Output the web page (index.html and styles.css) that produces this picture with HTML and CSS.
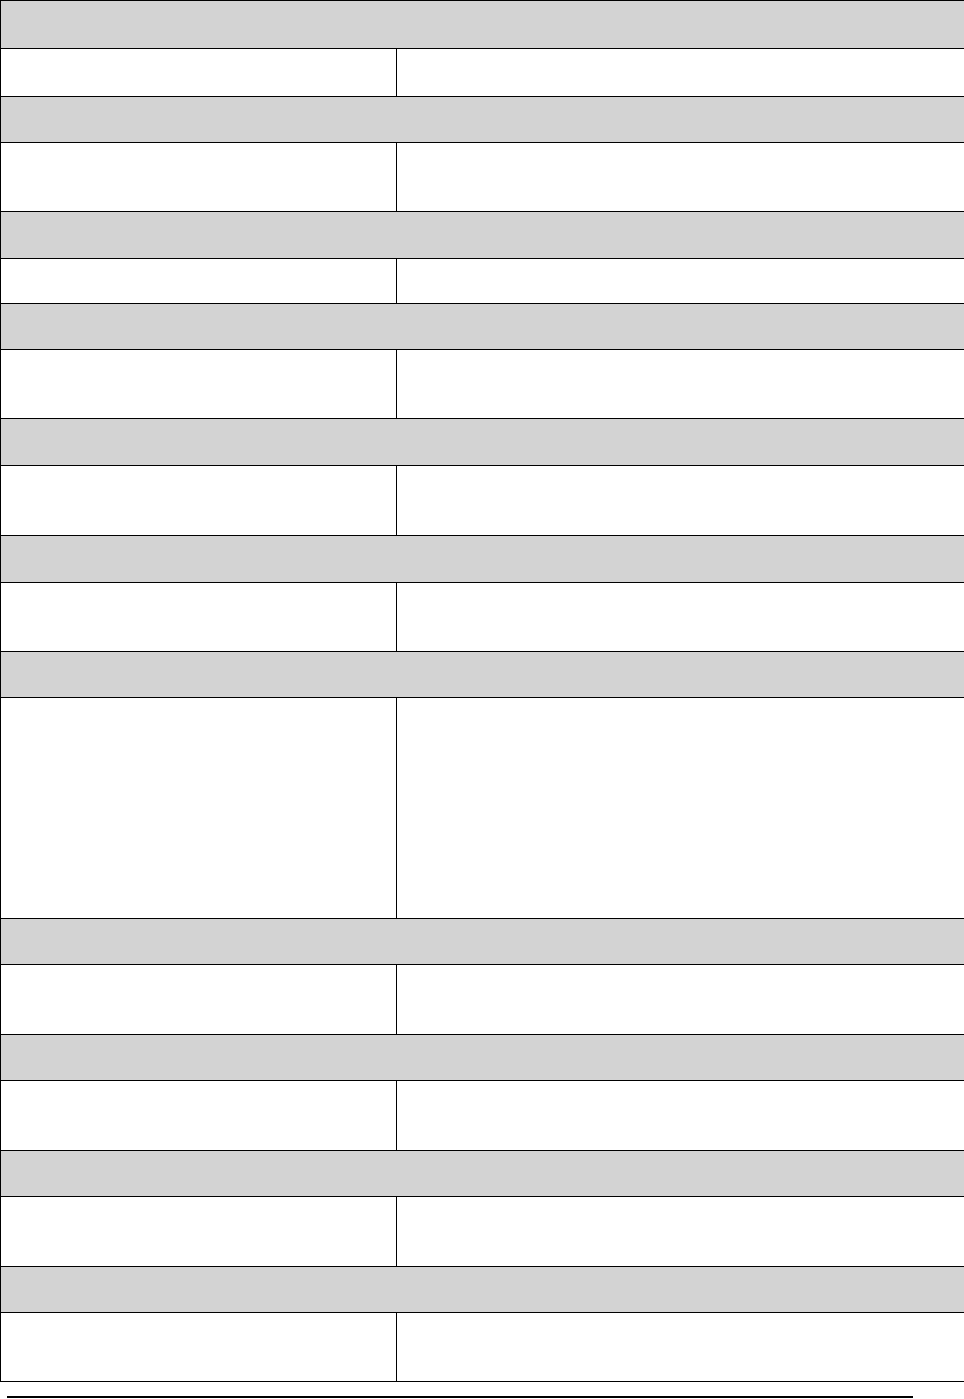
FILE: index.html
```html
<!DOCTYPE html>
<html>
<head>
<meta charset="utf-8">
<link rel="stylesheet" href="styles.css">
</head>
<body>
<table class="sheet">
  <colgroup><col class="c1"><col class="c2"></colgroup>
  <tr class="hd r48"><td colspan="2"></td></tr>
  <tr class="r48"><td></td><td></td></tr>
  <tr class="hd r46"><td colspan="2"></td></tr>
  <tr class="r69"><td></td><td></td></tr>
  <tr class="hd r47"><td colspan="2"></td></tr>
  <tr class="r45"><td></td><td></td></tr>
  <tr class="hd r46"><td colspan="2"></td></tr>
  <tr class="r69"><td></td><td></td></tr>
  <tr class="hd r47"><td colspan="2"></td></tr>
  <tr class="r70"><td></td><td></td></tr>
  <tr class="hd r47"><td colspan="2"></td></tr>
  <tr class="r69"><td></td><td></td></tr>
  <tr class="hd r46"><td colspan="2"></td></tr>
  <tr class="r221"><td></td><td></td></tr>
  <tr class="hd r46"><td colspan="2"></td></tr>
  <tr class="r70"><td></td><td></td></tr>
  <tr class="hd r46"><td colspan="2"></td></tr>
  <tr class="r70"><td></td><td></td></tr>
  <tr class="hd r46"><td colspan="2"></td></tr>
  <tr class="r70"><td></td><td></td></tr>
  <tr class="hd r46"><td colspan="2"></td></tr>
  <tr class="r69"><td></td><td></td></tr>
</table>
<div class="rule"></div>
</body>
</html>
```
FILE: styles.css
```css
html, body {
  margin: 0;
  padding: 0;
  background: #fff;
  font-family: "Liberation Sans", Arial, sans-serif;
}
.sheet {
  border-collapse: collapse;
  width: 964px;
  table-layout: fixed;
}
.sheet td {
  border: 1px solid #000;
  padding: 0;
}
.c1 { width: 396px; }
.c2 { width: 568px; }
.hd td { background: #d3d3d3; }
.r45 { height: 45px; }
.r46 { height: 46px; }
.r47 { height: 47px; }
.r48 { height: 48px; }
.r69 { height: 69px; }
.r70 { height: 70px; }
.r221 { height: 221px; }
.rule {
  margin: 14px 0 0 7px;
  width: 906px;
  height: 2px;
  background: #000;
}
```
